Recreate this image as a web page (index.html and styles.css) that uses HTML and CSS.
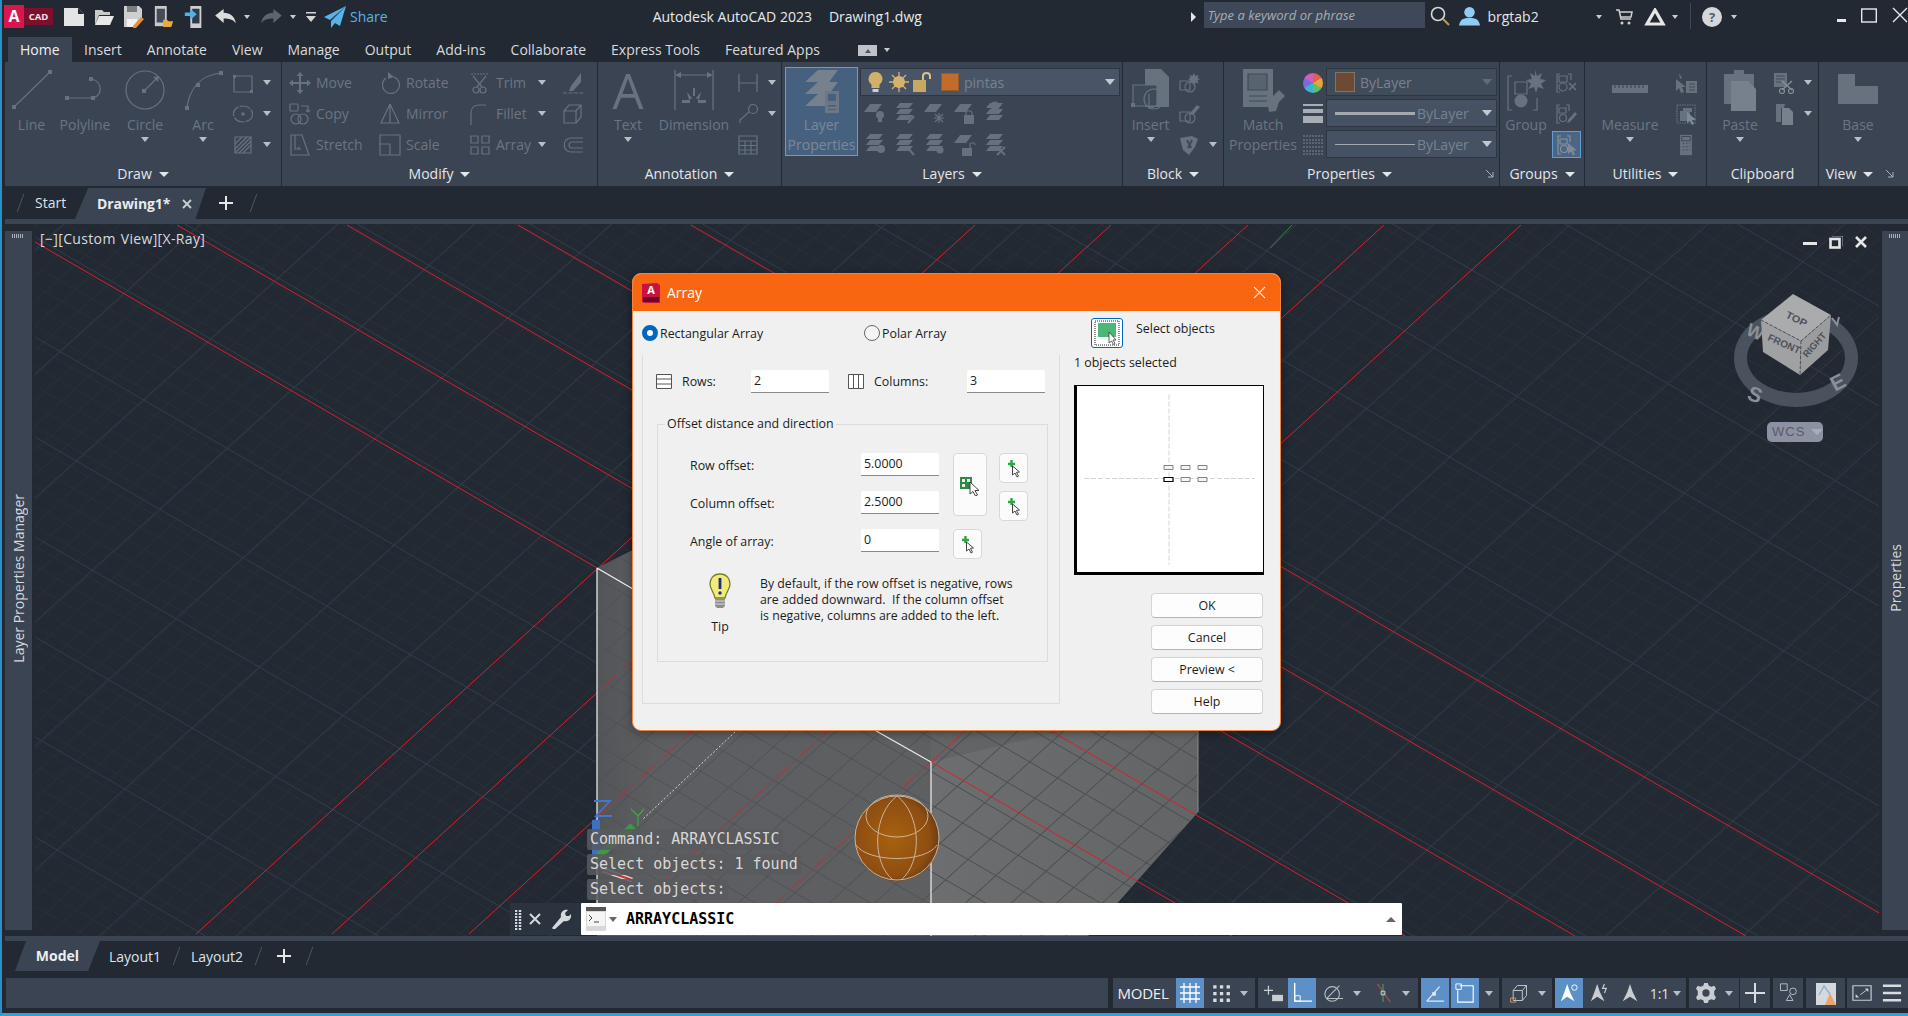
FILE: index.html
```html
<!DOCTYPE html>
<html lang="en">
<head>
<meta charset="utf-8">
<title>Autodesk AutoCAD 2023 Drawing1.dwg</title>
<link rel="stylesheet" href="styles.css">
</head>
<body>
<svg class="defs" width="0" height="0">
  <defs>
    <symbol id="pick" viewBox="0 0 18 20"><path d="M3 6h7M6.500 2v7" stroke="#27a844" stroke-width="2.400" fill="none"/><path d="M7.500 8l0 9 2.500-2 2 4 1.500-.8-2-3.800 3-.4z" fill="#fff" stroke="#333" stroke-width=".9"/></symbol>
    <symbol id="lay" viewBox="0 0 24 24"><path d="M7 3h12l-6 8H1z" fill="#66707e"/></symbol>
    <symbol id="stack" viewBox="0 0 24 24"><path d="M7 2h13l-4 5H3zM7 8h13l-4 5H3zM7 14h13l-4 5H3z" fill="#66707e"/></symbol>
  </defs>
</svg>
<div class="app">

  <header class="titlebar">
    <div class="logo"><span class="logo-a">A</span><span class="logo-cad">CAD</span></div>
    <div class="qat">
      <svg class="qi" viewBox="0 0 20 20"><path d="M0 1h14l6 6v12H0z" fill="#e4e4e4"/><path d="M14 1v6h6z" fill="#222933"/></svg>
      <svg class="qi" viewBox="0 0 20 20"><path d="M1 3h7l2 2h6v3H5L1 18z" fill="#c9c9c9"/><path d="M5 9h15l-4 9H1z" fill="#e8e8e8"/></svg>
      <svg class="qi" viewBox="0 0 20 22"><path d="M0 0h15l3 3v11l-6 7H0z" fill="#cfcfcf"/><path d="M3 0h10v6H3z" fill="#7d7d7d"/><path d="M3 13h10v8H3z" fill="#f3f3f3"/><path d="M9 20l8-9 3 2-8 9-3 .4z" fill="#e88f3c"/></svg>
      <svg class="qi" viewBox="0 0 20 24"><path d="M0 0h13v22H0z" fill="#c9c9c9"/><path d="M2 3h9v15H2z" fill="#444c58"/><path d="M9 15h4l2 1.500h5l-2 6.500H9z" fill="#e8ab3e"/></svg>
      <svg class="qi" viewBox="0 0 20 24"><path d="M6 0h12v24H6z" fill="#d0d0d0"/><path d="M8 3h8v16H8z" fill="#333b47"/><path d="M0 7h6V3l7 6-7 6v-4H0z" fill="#4fb2ec"/></svg>
    </div>
    <div class="undo">
      <svg class="uq" viewBox="0 0 22 16"><path d="M0 7L9 0v4c7 0 12 4 13 11-3-4-7-5-13-5v5z" fill="#dcdcdc"/></svg>
      <i class="car light"></i>
      <svg class="uq mr" viewBox="0 0 22 16"><path d="M22 7L13 0v4C6 4 1 8 0 15c3-4 7-5 13-5v5z" fill="#5c6470"/></svg>
      <i class="car light"></i>
      <svg class="qm" viewBox="0 0 10 10"><path d="M0 0h10v1.500H0zM0 4h10L5 10z" fill="#d5d5d5"/></svg>
      <svg class="share" viewBox="0 0 22 22"><path d="M22 0L0 11l6 3zM22 0L7 15v7l4-5 5 3z" fill="#58b4e8"/></svg>
      <span class="share-t">Share</span>
    </div>
    <div class="apptitle"><span>Autodesk AutoCAD 2023</span><span class="docname">Drawing1.dwg</span></div>
    <i class="tri-r"></i>
    <div class="search">Type a keyword or phrase</div>
    <svg class="mag" viewBox="0 0 20 20"><circle cx="8" cy="8" r="6.500" fill="none" stroke="#d8d8d8" stroke-width="1.600"/><path d="M13 13l6 6" stroke="#c79a4a" stroke-width="2"/></svg>
    <svg class="user" viewBox="0 0 22 20"><circle cx="11" cy="6" r="5.500" fill="#8fcdf5"/><path d="M0 20c1-7 5-8 11-8s10 1 11 8z" fill="#8fcdf5"/></svg>
    <span class="uname">brgtab2</span>
    <i class="car light c-user"></i>
    <svg class="cart" viewBox="0 0 17 16"><path d="M0 1h3l2 9h10M4 3h12l-1 5H5" fill="none" stroke="#cfcfcf" stroke-width="1.500"/><circle cx="6" cy="14" r="1.500" fill="#cfcfcf"/><circle cx="13" cy="14" r="1.500" fill="#cfcfcf"/></svg>
    <svg class="a360" viewBox="0 0 22 18"><path d="M11 2L3 16h16z" fill="none" stroke="#e6e6e6" stroke-width="3.200"/></svg>
    <i class="car light c-a"></i>
    <span class="tsep"></span>
    <span class="help">?</span>
    <i class="car light c-help"></i>
    <div class="winctl">
      <svg class="w-min" viewBox="0 0 15 15"><path d="M0 11h9v3H0z" fill="#e8e8e8"/></svg>
      <svg class="w-max" viewBox="0 0 16 15"><rect x=".7" y="1" width="14.600" height="13" fill="none" stroke="#e8e8e8" stroke-width="1.400"/></svg>
      <svg class="w-x" viewBox="0 0 16 16"><path d="M1 1l14 14M15 1L1 15" stroke="#e8e8e8" stroke-width="1.400"/></svg>
    </div>
  </header>

  <nav class="tabs">
    <span class="tab on">Home</span><span class="tab">Insert</span><span class="tab">Annotate</span><span class="tab">View</span><span class="tab">Manage</span><span class="tab">Output</span><span class="tab">Add-ins</span><span class="tab">Collaborate</span><span class="tab">Express Tools</span><span class="tab">Featured Apps</span>
    <span class="chip"><i class="up"></i></span><i class="car light c-chip"></i>
  </nav>

  <section class="ribbon">
    <div class="panel p-draw">
      <div class="pbody">
        <div class="big w53"><svg class="bi" viewBox="0 0 44 44"><path d="M4 39L40 4" /><path class="f" d="M2 37h4v4H2zM38 2h4v4h-4z"/></svg><span>Line</span></div>
        <div class="big w54"><svg class="bi" viewBox="0 0 44 44"><path d="M4 30h26M28 11c12 2 12 17 2 19"/><path class="f" d="M2 28h4v4H2zM28 28h4v4h-4zM26 9h4v4h-4z"/></svg><span>Polyline</span></div>
        <div class="big w66"><svg class="bi" viewBox="0 0 44 44"><circle cx="22" cy="22" r="19"/><path d="M21 23l13-13"/><path class="f" d="M19 21h4v4h-4z"/><path class="f" d="M36 8l-6 1 5 5z"/></svg><span>Circle</span><i class="car"></i></div>
        <div class="big w50"><svg class="bi" viewBox="0 0 44 44"><path d="M6 39C9 20 20 7 40 5"/><path class="f" d="M4 38h4v4H4zM38 3h4v4h-4zM15 15h4v4h-4z"/></svg><span>Arc</span><i class="car"></i></div>
        <div class="tools pl4">
          <div class="s"><svg class="si" viewBox="0 0 22 22"><path d="M2 4h18v16H2z"/><path class="f" d="M1 3h3v3H1zM18 18h3v3h-3z"/></svg><i class="car g9"></i></div>
          <div class="s"><svg class="si" viewBox="0 0 22 22"><ellipse cx="11" cy="11" rx="9.500" ry="8" stroke-dasharray="11 1.500"/><path class="f" d="M9.500 9.500h3v3h-3z"/></svg><i class="car g9"></i></div>
          <div class="s"><svg class="si" viewBox="0 0 22 22"><path d="M3 3h16v16H3z"/><path d="M3 15L15 3M3 19L19 3M7 19L19 7M11 19l8-8M3 10l7-7"/></svg><i class="car g9"></i></div>
        </div>
      </div>
      <div class="ptitle">Draw<i class="car w"></i></div>
    </div>

    <div class="panel p-mod">
      <div class="pbody modgrid">
        <div class="s t"><svg class="si" viewBox="0 0 22 22"><path class="f" d="M11 0l3.500 4H12v6h6V7.500l4 3.500-4 3.500V12h-6v6h2.500L11 22l-3.500-4H10v-6H4v2.500L0 11l4-3.500V10h6V4H7.500z"/></svg>Move</div>
        <div class="s t"><svg class="si" viewBox="0 0 22 22"><path d="M15 5a8.500 8.500 0 1 1-8 1"/><path class="f" d="M9 0v7l6-2z"/></svg>Rotate</div>
        <div class="s t tc"><svg class="si" viewBox="0 0 22 22"><path d="M2 2h18" stroke-dasharray="2 1"/><path d="M4 4l9 11M17 4L8 15"/><circle cx="7" cy="18" r="3"/><circle cx="14" cy="18" r="3"/></svg>Trim<i class="car g9 end"></i></div>
        <div class="s"><svg class="si" viewBox="0 0 22 22"><path class="f" d="M19 1v9l-8 9H7l2-5z"/><path d="M1 21h20" stroke-dasharray="4 1.500"/></svg></div>
        <div class="s t"><svg class="si" viewBox="0 0 22 22"><rect x="1" y="1" width="8" height="7" rx="1"/><path d="M12 3h7v6M19 9l-2-2M19 9l2-2"/><circle cx="7" cy="16" r="5"/><circle cx="14" cy="16" r="5"/></svg>Copy</div>
        <div class="s t"><svg class="si" viewBox="0 0 22 22"><path d="M11 1L2 20h9zM11 1l9 19h-9z"/></svg>Mirror</div>
        <div class="s t tc"><svg class="si" viewBox="0 0 22 22"><path d="M2 22V10c0-5 3-8 8-8h7"/></svg>Fillet<i class="car g9 end"></i></div>
        <div class="s"><svg class="si" viewBox="0 0 22 22"><path d="M2 8h12v12H2zM2 8l5-6h12v12l-5 6M14 8l5-6"/></svg></div>
        <div class="s t"><svg class="si" viewBox="0 0 22 22"><path d="M2 1h11l7 20H2zM6 1v14h5l-2-2"/></svg>Stretch</div>
        <div class="s t"><svg class="si" viewBox="0 0 22 22"><path d="M1 1h20v20H1zM1 10h10v11"/></svg>Scale</div>
        <div class="s t tc"><svg class="si" viewBox="0 0 22 22"><path d="M2 2h7v7H2zM13 2h7v7h-7zM2 13h7v7H2zM13 13h7v7h-7z"/></svg>Array<i class="car g9 end"></i></div>
        <div class="s"><svg class="si" viewBox="0 0 22 22"><path d="M21 4H9c-9 0-9 14 0 14h12M21 8H10c-4 0-4 6 0 6h11"/></svg></div>
      </div>
      <div class="ptitle">Modify<i class="car w"></i></div>
    </div>

    <div class="panel p-ann">
      <div class="pbody">
        <div class="big w60"><span class="bigA">A</span><span>Text</span><i class="car"></i></div>
        <div class="big w72"><svg class="bi" viewBox="0 0 44 44"><path d="M3 2v40M41 2v40M5 7h34"/><path class="f" d="M3 7l6-3v6zM41 7l-6-3v6zM10 32h8v3h-8zM26 32h8v3h-8zM15 24l5 6 -3 2zM29 24l-5 6 3 2zM21 20h2v8h-2z"/></svg><span>Dimension</span></div>
        <div class="tools pl7">
          <div class="s"><svg class="si" viewBox="0 0 22 22"><path d="M2 2v18M20 2v18M2 11h18"/></svg><i class="car g9"></i></div>
          <div class="s"><svg class="si" viewBox="0 0 22 22"><circle cx="16" cy="6" r="4.500"/><path d="M12 9L3 17v3"/></svg><i class="car g9"></i></div>
          <div class="s"><svg class="si" viewBox="0 0 22 22"><path d="M2 2h18v18H2zM2 7h18M2 11.500h18M2 16h18M8 7v13M14 7v13"/></svg></div>
        </div>
      </div>
      <div class="ptitle">Annotation<i class="car w"></i></div>
    </div>

    <div class="panel p-lay">
      <div class="pbody">
        <div class="lp">
          <svg class="lpi" viewBox="0 0 36 44"><path class="lf" d="M14 1h20l-9 12H1zM14 13h20l-9 12H1zM14 25h20l-9 12H1z"/><path class="lb" d="M21 22h14v22H21z"/><path class="lw" d="M24 25h8v7h-8zM24 36h8v1.500h-8zM24 40h8v1h-8z"/></svg>
          <span>Layer</span><span>Properties</span>
        </div>
        <div class="laycol">
          <div class="combo lc">
            <svg class="ci" viewBox="0 0 14 20"><path d="M7 0a7 7 0 0 1 4 12.700V16H3v-3.300A7 7 0 0 1 7 0z" fill="#d1b06a"/><path d="M4 17h6v3H4z" fill="#cfcfcf"/></svg>
            <svg class="ci ci-b" viewBox="0 0 20 20"><circle cx="10" cy="10" r="6" fill="#d4b46a"/><path d="M10 0v20M0 10h20M3 3l14 14M17 3L3 17" stroke="#d4b46a" stroke-width="1.300"/></svg>
            <svg class="ci ci-c" viewBox="0 0 20 20"><path d="M0 8h13v12H0z" fill="#c9a861"/><path d="M10 8V4c0-4 7-4 7 0v3" fill="none" stroke="#d9c28c" stroke-width="2"/></svg>
            <span class="sw"></span><span class="cname">pintas</span><i class="car big-c"></i>
          </div>
          <div class="lrow">
            <svg class="li" viewBox="0 0 24 24"><use href="#lay"/><circle cx="17" cy="14" r="4" fill="#66707e"/><path d="M15 17h4v4h-4z" fill="#66707e"/></svg>
            <svg class="li" viewBox="0 0 24 24"><use href="#stack"/><path d="M15 22l6-7" stroke="#66707e" stroke-width="2"/></svg>
            <svg class="li" viewBox="0 0 24 24"><use href="#lay"/><path d="M16 12v10M11 17h10M12 13l8 8M20 13l-8 8" stroke="#66707e"/></svg>
            <svg class="li" viewBox="0 0 24 24"><use href="#lay"/><path d="M11 14h10v9H11z" fill="#66707e"/><path d="M13 14v-2c0-3 6-3 6 0v2" fill="none" stroke="#66707e"/></svg>
            <svg class="li" viewBox="0 0 24 24"><use href="#stack"/><circle cx="12" cy="5" r="4.500" fill="#66707e"/></svg>
          </div>
          <div class="lrow">
            <svg class="li" viewBox="0 0 24 24"><use href="#stack"/><circle cx="18" cy="17" r="4" fill="#66707e"/></svg>
            <svg class="li" viewBox="0 0 24 24"><use href="#stack"/><path d="M15 16l6 7" stroke="#66707e" stroke-width="2"/></svg>
            <svg class="li" viewBox="0 0 24 24"><use href="#stack"/><circle cx="17" cy="18" r="3.500" fill="#66707e"/></svg>
            <svg class="li" viewBox="0 0 24 24"><use href="#lay"/><path d="M9 16h10v8H9z" fill="#66707e"/><path d="M17 16v-3c0-3 5-3 5 0" fill="none" stroke="#66707e"/></svg>
            <svg class="li" viewBox="0 0 24 24"><use href="#stack"/><path d="M14 15l8 8M22 15l-8 8" stroke="#66707e" stroke-width="2"/></svg>
          </div>
        </div>
      </div>
      <div class="ptitle">Layers<i class="car w"></i></div>
    </div>

    <div class="panel p-blk">
      <div class="pbody">
        <div class="big w55"><svg class="bi" viewBox="0 0 44 44"><path class="f" d="M16 1h16l8 8v30H16z"/><path d="M4 17h24v21H4z" fill="#3f4a58"/><path d="M20 26v14a13 13 0 1 0 0-26"/><circle cx="25" cy="31" r="10"/><path class="f" d="M2 35h4v4H2z"/></svg><span>Insert</span><i class="car"></i></div>
        <div class="tools">
          <div class="s"><svg class="si" viewBox="0 0 22 22"><path d="M2 9h10v9H2z"/><circle cx="12" cy="15" r="5"/><path class="f" d="M16 1l1.500 3 3-1-1 3 2.500 1-2.500 1.500 1 3-3-1-1.500 3-1.500-3-3 1 1-3-2.500-1.500 2.500-1-1-3 3 1z"/></svg></div>
          <div class="s"><svg class="si" viewBox="0 0 22 22"><path d="M2 9h10v9H2z"/><circle cx="12" cy="15" r="5"/><path class="f" d="M13 9l6-7 3 2-6 7-4 1z"/></svg></div>
          <div class="s"><svg class="si" viewBox="0 0 22 22"><path class="f" d="M2 4l12-2 6 3-3 8-6 8-6-5z"/><path d="M9 6l4 8M14 6l-4 8" stroke="#3f4a58" stroke-width="2"/></svg><i class="car g9"></i></div>
        </div>
      </div>
      <div class="ptitle">Block<i class="car w"></i></div>
    </div>

    <div class="panel p-prop">
      <div class="pbody">
        <div class="big w78 lines2"><svg class="bi" viewBox="0 0 44 44"><path class="f" d="M2 1h30v38H2z"/><path d="M7 6h19v16H7zM8 28h18M8 33h18" stroke="#3f4a58" fill="#59636f"/><path class="f" d="M32 28l6-6 6 6-6 6-3 9-7 1-1-7z"/></svg><span>Match</span><span>Properties</span></div>
        <div class="propicons">
          <div class="wheel"></div>
          <svg class="si" viewBox="0 0 22 22"><path d="M1 1h20v2H1zM1 6h20v4H1zM1 13h20v7H1z" fill="#a8adb5" stroke="none"/></svg>
          <svg class="si" viewBox="0 0 22 22"><path d="M1 2h20M1 6h20M1 9h20M1 13h20M1 17h20M1 20h20" stroke="#7d8591" stroke-dasharray="2 1" stroke-width="1"/></svg>
        </div>
        <div class="propcombos">
          <div class="combo pc"><span class="sw2"></span><span class="cname">ByLayer</span><i class="car big-c dim"></i></div>
          <div class="combo pc ac"><span class="lw1"></span><span class="cname">ByLayer</span><i class="car big-c"></i></div>
          <div class="combo pc ac"><span class="lw2"></span><span class="cname">ByLayer</span><i class="car big-c"></i></div>
        </div>
      </div>
      <div class="ptitle pr24">Properties<i class="car w"></i><svg class="launch" viewBox="0 0 8 8"><path d="M0 0l7 7M7 2v5H2" stroke="#aab0b8" fill="none"/></svg></div>
    </div>

    <div class="panel p-grp">
      <div class="pbody">
        <div class="big w52"><svg class="bi" viewBox="0 0 40 44"><path d="M6 8H2v34h4M27 42h4V30"/><path d="M9 14h12v12H9z"/><circle cx="15" cy="33" r="6.500" class="f"/><path class="f" d="M29 2l2 6 5-3-2 6 6 1-5 4 3 5-6-2-2 6-2-6-6 2 3-5-5-4 6-1-2-6 5 3z"/></svg><span>Group</span></div>
        <div class="tools pl3">
          <div class="s"><svg class="si" viewBox="0 0 22 22"><path d="M5 2H2v18h3M13 2h3v6"/><path d="M4 4h8v6H4z"/><circle cx="8" cy="15" r="4"/><path d="M14 11l7 7M21 11l-7 7" stroke-width="1.600"/></svg></div>
          <div class="s"><svg class="si" viewBox="0 0 22 22"><path d="M5 2H2v18h3M11 2h3v6"/><path d="M4 5h7v5H4z"/><circle cx="8" cy="15" r="3.500"/><path class="f" d="M13 17l7-8 2 2-7 8-3 1z"/></svg></div>
          <div class="s hl"><svg class="si" viewBox="0 0 22 22"><path d="M5 2H2v18h3M11 2h3v6"/><path d="M4 5h7v5H4z"/><circle cx="8" cy="15" r="3.500"/><path d="M12 9v11l3-2.500 2 4 2-1-2-4h4z" fill="#7f8a98" stroke="none"/></svg></div>
        </div>
      </div>
      <div class="ptitle">Groups<i class="car w"></i></div>
    </div>

    <div class="panel p-util">
      <div class="pbody">
        <div class="big w90"><svg class="bi ruler" viewBox="0 0 38 44"><path class="f" d="M1 17h36v8H1z"/><path d="M4 17v3M8 17v3M12 17v3M16 17v3M20 17v3M24 17v3M28 17v3M32 17v3" stroke="#3f4a58"/></svg><span>Measure</span><i class="car"></i></div>
        <div class="tools">
          <div class="s"><svg class="si" viewBox="0 0 22 22"><path class="f" d="M1 7v12l3-3 2 5 3-1-2-5h4zM4 1l3 5-2 1zM11 9h11v12H11z"/><path d="M14 12h6M14 15h6M14 18h6" stroke="#3f4a58"/></svg></div>
          <div class="s"><svg class="si" viewBox="0 0 22 22"><path d="M2 2h18v18H2z" stroke-dasharray="1.500 1"/><path class="f" d="M5 8h10v10H5zM8 5h9v4H8z"/><path d="M12 9v11l3-2 2 4 2-1-2-4h4z" fill="#7f8a98" stroke="none"/></svg></div>
          <div class="s"><svg class="si" viewBox="0 0 22 26"><path class="f" d="M4 1h14v24H4z"/><path d="M6 3h10v5H6zM7 11h2M11 11h2M15 11h1M7 15h2M11 15h2M15 15h1M7 19h2M11 19h2M15 19h1" stroke="#3f4a58"/></svg></div>
        </div>
      </div>
      <div class="ptitle">Utilities<i class="car w"></i></div>
    </div>

    <div class="panel p-clip">
      <div class="pbody">
        <div class="big w66"><svg class="bi" viewBox="0 0 36 44"><path class="f" d="M2 6h10V2h10v4h10v30H2z"/><path d="M9 13h17l8 8v22H9z" class="f2"/></svg><span>Paste</span><i class="car"></i></div>
        <div class="tools">
          <div class="s"><svg class="si" viewBox="0 0 22 22"><path class="f" d="M1 1h13v14H1z"/><path d="M3 4h9M3 7h9M3 10h5" stroke="#3f4a58"/><path d="M9 9l10 9M19 9L9 18" stroke="#858d99" stroke-width="1.500"/><circle cx="9" cy="19" r="2.500" stroke="#858d99"/><circle cx="18" cy="19" r="2.500" stroke="#858d99"/></svg><i class="car g9"></i></div>
          <div class="s"><svg class="si" viewBox="0 0 22 22"><path class="f" d="M3 1h9l-1 4h-3v14H3z"/><path class="f2" d="M9 5h7l4 4v13H9z"/></svg><i class="car g9"></i></div>
        </div>
      </div>
      <div class="ptitle">Clipboard</div>
    </div>

    <div class="panel p-view">
      <div class="pbody">
        <div class="big w78"><svg class="bi" viewBox="0 0 42 44"><path class="f" d="M1 6h17v12h23v18H1z"/></svg><span>Base</span><i class="car"></i></div>
      </div>
      <div class="ptitle pr26">View<i class="car w"></i><svg class="launch l2" viewBox="0 0 8 8"><path d="M0 0l7 7M7 2v5H2" stroke="#aab0b8" fill="none"/></svg></div>
    </div>
  </section>

  <div class="doctabs">
    <i class="slash sl1"></i><span class="dt-start">Start</span>
    <span class="dt-active"><b>Drawing1*</b><svg class="dt-x" viewBox="0 0 10 10"><path d="M1 1l8 8M9 1L1 9" stroke="#c9ced4" stroke-width="1.800"/></svg></span>
    <svg class="plus" viewBox="0 0 16 16"><path d="M8 1v14M1 8h14" stroke="#e4e6e8" stroke-width="2"/></svg>
    <i class="slash sl2"></i>
  </div>
  <div class="band"></div>

  <main class="work">
    <aside class="side left"><i class="grip"></i><span class="vtext">Layer Properties Manager</span></aside>
    <div class="viewport">
      <svg class="canvas" viewBox="35 224 1844 712" preserveAspectRatio="none">
        <defs>
          <pattern id="minor" patternUnits="userSpaceOnUse" width="100" height="100" patternTransform="matrix(.1668 .0968 .1342 -.1222 37 237)">
            <path d="M0 50H100M50 0V100" stroke="#272e39" stroke-width="5" fill="none"/>
          </pattern>
          <pattern id="pgrid" patternUnits="userSpaceOnUse" width="100" height="100" patternTransform="matrix(.278 .161 .2237 -.2037 37 237)">
            <path d="M0 50H100M50 0V100" stroke="#4a4d50" stroke-width="3" fill="none"/>
          </pattern>
          <linearGradient id="pl" x1="0" x2="1" y1="0" y2="0"><stop offset="0" stop-color="#515356"/><stop offset=".1" stop-color="#606264"/><stop offset="1" stop-color="#636566"/></linearGradient>
          <linearGradient id="pr" x1="0" x2="1" y1="0" y2="0"><stop offset="0" stop-color="#6c6e6f"/><stop offset="1" stop-color="#626465"/></linearGradient>
          <radialGradient id="ball" cx=".45" cy=".5" r=".55"><stop offset="0" stop-color="#a8610f"/><stop offset=".8" stop-color="#8e4e12"/><stop offset="1" stop-color="#6d3d14"/></radialGradient>
        </defs>
        <rect x="35" y="224" width="1844" height="712" fill="url(#minor)"/>
        <path class="gridA" d="M35 -763L1879 306M35 -663L1879 406M35 -563L1879 506M35 -463L1879 606M35 -363L1879 706M35 -263L1879 806M35 -163L1879 906M35 -63L1879 1006M35 37L1879 1106M35 137L1879 1206M35 237L1879 1306M35 337L1879 1406M35 437L1879 1506M35 537L1879 1606M35 637L1879 1706M35 737L1879 1806M35 837L1879 1906"/>
        <path class="gridA" d="M35 250L1879 -1419M35 374L1879 -1295M35 498L1879 -1171M35 622L1879 -1047M35 746L1879 -923M35 870L1879 -799M35 994L1879 -675M35 1118L1879 -551M35 1242L1879 -427M35 1366L1879 -303M35 1490L1879 -179M35 1614L1879 -55M35 1738L1879 69M35 1862L1879 193M35 1986L1879 317M35 2110L1879 441M35 2234L1879 565M35 2358L1879 689M35 2482L1879 813M35 2606L1879 937"/>
        <path d="M597 568L931 400L1198 600V812L1088 936H597z" fill="url(#pl)"/>
        <path d="M931 762L1198 700V812L1088 936H931z" fill="url(#pr)"/>
        <path d="M597 568L931 400L1198 600V812L1088 936H597z" fill="url(#pgrid)"/>
        <path d="M35 242L597 568M931 762L1232 936M177 225L1405 936M347 225L1575 936M518 225L1746 936M691 225L1919 936" class="red"/>
        <path d="M975 225L196 934M1111 225L332 934M1248 225L469 934M1384 225L605 934M1521 225L742 934" class="red"/>
        <path d="M597 568L931 400V936H597z" fill="#58595b" opacity=".35"/>
        <path d="M1292 225L1270 248" stroke="#2c8a3c" fill="none"/>
        <path d="M597 568V905M597 568L878 732L931 762V936" class="white"/>
        <path d="M1198 700V812" class="faint"/>
        <path d="M735 732L642 820" class="dots"/>
        <ellipse cx="897" cy="838" rx="42" ry="43" fill="url(#ball)"/>
        <g class="wire">
          <ellipse cx="897" cy="838" rx="42" ry="42"/>
          <ellipse cx="897" cy="816" rx="31" ry="21"/>
          <path d="M856 845c12 18 70 18 81 0M897 796c-24 18-26 66 -4 84M897 796c24 18 26 66 4 84"/>
        </g>
        <path d="M596 820V857" stroke="#3d6fc4" stroke-width="8" fill="none"/>
        <path d="M596 858L633 826" stroke="#3d9a42" stroke-width="7" fill="none"/>
        <path d="M603 870L632 880" stroke="#d9d3d3" stroke-width="5" fill="none"/>
        <path d="M603 870L632 880" stroke="#c03535" stroke-width="2" fill="none"/>
        <path d="M594 801h16L596 816h16" fill="none" stroke="#3f78cc" stroke-width="1.800"/>
        <path d="M631 809l7 7 6-7M638 816v10" fill="none" stroke="#43a34a" stroke-width="1.300"/>
      </svg>
      <div class="vplabel">[&#8722;][Custom View][X-Ray]</div>
      <div class="vpctl">
        <svg class="vc1" viewBox="0 0 14 14"><path d="M0 7h14v3H0z" fill="#e6e6e6"/></svg>
        <svg class="vc2" viewBox="0 0 14 13"><path d="M3 0h11v10" fill="none" stroke="#aab" stroke-width="1"/><rect x="1.500" y="3" width="9" height="8.500" fill="none" stroke="#e6e6e6" stroke-width="2.600"/></svg>
        <svg class="vc3" viewBox="0 0 12 12"><path d="M1 1l10 10M11 1L1 11" stroke="#e6e6e6" stroke-width="2.600"/></svg>
      </div>
      <svg class="cube" viewBox="1725 285 140 130">
        <path fill-rule="evenodd" d="M1734 358a62 49 0 1 0 124 0a62 49 0 1 0-124 0zM1747 358a49 35 0 1 0 98 0a49 35 0 1 0-98 0z" fill="#4a525e"/>
        <text class="cl" transform="translate(1745 334) rotate(25)" font-size="18">W</text>
        <text class="cl" transform="translate(1746 399) rotate(20)" font-size="21">S</text>
        <text class="cl" transform="translate(1835 392) rotate(-28)" font-size="21">E</text>
        <path d="M1832 318l5 7 2-8" stroke="#8b9098" stroke-width="2" fill="none"/>
        <path d="M1793 294L1831 315L1801 341L1761 320z" fill="#a9abad"/>
        <path d="M1761 320L1801 341L1800 375L1763 352z" fill="#9fa1a3"/>
        <path d="M1831 315L1801 341L1800 375L1828 350z" fill="#9a9c9e"/>
        <path d="M1761 320L1801 341L1831 315M1801 341L1800 375" fill="none" stroke="#4d5158" stroke-dasharray="3 2"/>
        <text class="cf" transform="translate(1785 317) rotate(27) scale(1 .9)" font-size="11">TOP</text>
        <text class="cf" transform="translate(1767 340) rotate(24)" font-size="10">FRONT</text>
        <text class="cf" transform="translate(1807 358) rotate(-48)" font-size="9.500">RIGHT</text>
      </svg>
      <div class="wcs">WCS<i class="wcs-c"></i></div>
      <div class="history">
        <span>Command: ARRAYCLASSIC</span>
        <span>Select objects: 1 found</span>
        <span>Select objects:</span>
      </div>
      <div class="cmdline">
        <div class="cmdgrip">
          <svg class="dotsg" viewBox="0 0 7 21"><path d="M0 0h7v21H0z" fill="none"/><path d="M1 1v20M5 1v20" stroke="#d5d8dc" stroke-width="2.500" stroke-dasharray="2 1"/></svg>
          <svg class="cmdx" viewBox="0 0 12 12"><path d="M1 1l10 10M11 1L1 11" stroke="#d5d8dc" stroke-width="2"/></svg>
          <svg class="wrench" viewBox="0 0 20 20"><path d="M1 19l9-11c-1-4 2-8 7-7l-3 3 1 3 3 0 2-2c1 5-3 8-7 7l-10 9z" fill="#d5d8dc"/></svg>
        </div>
        <div class="cmdbox">
          <svg class="cmdico" viewBox="0 0 20 24"><path d="M0 0h20v24H0z" fill="#d8d8d8"/><path d="M1 5h18v14H1z" fill="#f5f5f5"/><path d="M0 0h20v4H0z" fill="#555"/><path d="M3 8l3 3-3 3M8 15h5" stroke="#444" fill="none"/></svg>
          <i class="car cmdcar"></i>
          <span class="cmdtxt">ARRAYCLASSIC</span>
          <i class="up cmdup"></i>
        </div>
      </div>
    </div>
    <aside class="side right"><i class="grip"></i><span class="vtext">Properties</span></aside>
  </main>
  <div class="band"></div>

  <div class="layouttabs">
    <span class="lt-model">Model</span>
    <span class="lt">Layout1</span><i class="slash sl3"></i>
    <span class="lt">Layout2</span><i class="slash sl4"></i>
    <svg class="plus p2" viewBox="0 0 16 16"><path d="M8 1v14M1 8h14" stroke="#e4e6e8" stroke-width="2"/></svg>
    <i class="slash sl5"></i>
  </div>

  <footer class="status">
    <div class="sb-left"></div>
    <div class="sg w142">
      <span class="sc w60 stxt">MODEL</span>
      <span class="sc w28 act ml3"><svg class="st" viewBox="0 0 20 20"><path d="M4 0v20M10 0v20M16 0v20M0 4h20M0 10h20M0 16h20" stroke="#fff" stroke-width="1.300"/></svg></span>
      <span class="sc w50"><svg class="st" viewBox="0 0 18 18"><path d="M2 2h3v3H2zM8 2h3v3H8zM14 2h3v3h-3zM2 8h3v3H2zM8 8h3v3H8zM14 8h3v3h-3zM2 14h3v3H2zM8 14h3v3H8zM14 14h3v3h-3z" fill="#d8dbdf"/></svg><i class="car st-c"></i></span>
    </div>
    <div class="sg w160">
      <span class="sc w30"><svg class="st" viewBox="0 0 22 22"><path d="M6 3v10M1 8h10" stroke="#c9cdd2" stroke-width="1.400"/><path d="M10 13h12v7H10z" fill="#c9cdd2"/></svg></span>
      <span class="sc w28 act"><svg class="st" viewBox="0 0 22 22"><path d="M3 0v20h19" fill="none" stroke="#fff" stroke-width="1.500"/><path d="M3 14h6v6H3z" fill="none" stroke="#fff" stroke-width="1"/></svg></span>
      <span class="sc w52"><svg class="st" viewBox="0 0 22 22"><circle cx="9" cy="12" r="8" fill="none" stroke="#b7bcc2" stroke-width="1.200"/><path d="M3 17L17 3M3 17h18" fill="none" stroke="#b7bcc2" stroke-width="1.200"/></svg><i class="car st-c"></i></span>
      <span class="sc w46"><svg class="st" viewBox="0 0 22 22"><path d="M5 1l14 20" stroke="#b84a4a" stroke-width="1.200"/><path d="M11 1v20" stroke="#4a9a5a" stroke-width="1.200"/><path d="M9 9h4v4H9z" fill="none" stroke="#dde"/></svg><i class="car st-c"></i></span>
    </div>
    <div class="sg w78">
      <span class="sc w28 act"><svg class="st" viewBox="0 0 22 22"><path d="M2 20L16 4M2 20h19" fill="none" stroke="#dfe7f2" stroke-width="1.400"/><path d="M8 10h4v4H8z" fill="#dfe7f2"/></svg></span>
      <span class="sc w28 act ml2"><svg class="st" viewBox="0 0 22 22"><path d="M5 3h15v18H3V8" fill="none" stroke="#fff" stroke-width="1.200"/><path d="M1 1h6v6H1z" fill="none" stroke="#fff"/></svg></span>
      <span class="sc w20"><i class="car"></i></span>
    </div>
    <div class="sg w50">
      <span class="sc w50"><svg class="st" viewBox="0 0 22 24"><path d="M4 9h11v12H4zM4 9l5-6h11v12l-5 6M15 9l5-6" fill="none" stroke="#c9cdd2" stroke-width="1.100"/><path d="M1 18h6v5H1z" fill="none" stroke="#e4a06a"/></svg><i class="car st-c"></i></span>
    </div>
    <div class="sg w131">
      <span class="sc w28 act"><svg class="st" viewBox="0 0 22 22"><path d="M9 1l3 9 5 10-8-5-7 5 4-10z" fill="#fff"/><circle cx="17" cy="5" r="3" fill="none" stroke="#fff"/></svg></span>
      <span class="sc w31"><svg class="st" viewBox="0 0 22 22"><path d="M9 1l3 9 5 10-8-5-7 5 4-10z" fill="#c9cdd2"/><path d="M17 1l-2 5h4l-2 5" fill="none" stroke="#c9cdd2" stroke-width="1.300"/></svg></span>
      <span class="sc w31"><svg class="st" viewBox="0 0 22 22"><path d="M11 1l3 9 5 10-8-5-8 5 5-10z" fill="#c9cdd2"/></svg></span>
      <span class="sc w41 s11">1:1<i class="car ml4"></i></span>
    </div>
    <div class="sg w50">
      <span class="sc w50"><svg class="st gear" viewBox="0 0 22 22"><path d="M9 0h4l1 3 3 1 3-1 2 3-2 3v4l2 3-2 3-3-1-3 1-1 3H9l-1-3-3-1-3 1-2-3 2-3V9L0 6l2-3 3 1 3-1z" fill="#c9cdd2"/><circle cx="11" cy="11" r="4" fill="#3b4453"/></svg><i class="car st-c"></i></span>
    </div>
    <div class="sg w30 gl0"><span class="sc w30"><svg class="st" viewBox="0 0 20 20"><path d="M10 0v20M0 10h20" stroke="#d8dbdf" stroke-width="2"/></svg></span></div>
    <div class="sg w30"><span class="sc w30"><svg class="st" viewBox="0 0 22 24"><path d="M2 1h8v8H2zM9 21l4-7 4 7z" fill="none" stroke="#c9cdd2"/><circle cx="17" cy="10" r="4" fill="none" stroke="#c9cdd2"/></svg></span></div>
    <div class="sg w39"><span class="sc w39"><svg class="stb" viewBox="0 0 24 24"><path d="M2 2h20v22H2z" fill="#d5d8dc"/><path d="M5 14l5-9 6 8" fill="none" stroke="#8ab0d5" stroke-width="1.300"/><path d="M16 12l6 12H11z" fill="#eba46a"/></svg></span></div>
    <div class="sg w61 lastg">
      <span class="sc w30"><svg class="st" viewBox="0 0 22 22"><path d="M1 3h20v16H1z" fill="none" stroke="#c9cdd2" stroke-width="1.300"/><path d="M14 6h4v4zM8 16H4v-4z" fill="#c9cdd2"/><path d="M9 13l8-6" stroke="#c9cdd2"/></svg></span>
      <span class="sc w30"><svg class="st" viewBox="0 0 22 22"><path d="M1 3h20M1 11h20M1 19h20" stroke="#d8dbdf" stroke-width="2.600"/></svg></span>
    </div>
  </footer>

  <div class="dialog">
    <div class="dlg-title">
      <svg class="dlg-ico" viewBox="0 0 18 20"><path d="M0 1l15-1 3 2v18H2l-2-1z" fill="#c8123f"/><path d="M1 14h16v5H1z" fill="#6e0a26"/><text x="9" y="11" class="dlg-a">A</text></svg>
      <span>Array</span>
      <svg class="dlg-x" viewBox="0 0 14 14"><path d="M1 1l12 12M13 1L1 13" stroke="#fff" stroke-width="1.100"/></svg>
    </div>
    <div class="dlg-body">
      <div class="dlg-left">
        <div class="radios">
          <span class="radio sel"></span><span class="rl1">Rectangular Array</span>
          <span class="radio"></span><span>Polar Array</span>
        </div>
        <div class="frame">
          <div class="rc-row">
            <svg class="rcico" viewBox="0 0 16 15"><path d="M.5.500h15v14H.5zM.5 5h15M.5 10h15" fill="#fff" stroke="#555"/></svg>
            <span>Rows:</span>
            <div class="inp">2</div>
            <span></span>
            <svg class="rcico" viewBox="0 0 16 15"><path d="M.5.500h15v14H.5zM5.500.500v14M10.500.500v14" fill="#fff" stroke="#555"/></svg>
            <span>Columns:</span>
            <div class="inp">3</div>
          </div>
          <fieldset class="offset">
            <legend>Offset distance and direction</legend>
            <div class="ofgrid">
              <span class="oflab">Row offset:</span>
              <div class="inp">5.0000</div>
              <button class="pbtn tall"><svg class="pi" viewBox="0 0 22 22"><path d="M1 3h12v12H1z" fill="#2e8b47"/><path d="M3 5h3v3H3zM8 5h3v3H8zM3 10h3v3H3z" fill="#e9f3ea"/><path d="M11 8v12l3-2.500 2.500 4.500 2-1-2.500-4.500h4z" fill="#fff" stroke="#333" stroke-width=".9"/></svg></button>
              <button class="pbtn sm"><svg class="pk"><use href="#pick"/></svg></button>
              <span class="oflab">Column offset:</span>
              <div class="inp">2.5000</div>
              <button class="pbtn sm c3"><svg class="pk"><use href="#pick"/></svg></button>
              <span class="oflab">Angle of array:</span>
              <div class="inp">0</div>
              <button class="pbtn sm"><svg class="pk"><use href="#pick"/></svg></button>
            </div>
            <div class="tiprow">
              <div class="tipcol">
                <svg class="bulb" viewBox="0 0 22 36"><path d="M11 1c7 0 10 5 10 10 0 5-4 8-5 14H6C5 19 1 16 1 11 1 6 4 1 11 1z" fill="#f2ea7c" stroke="#7a7a28" stroke-width="1.300"/><path d="M11 5v11" stroke="#20307a" stroke-width="2.800"/><circle cx="11" cy="20" r="1.700" fill="#20307a"/><path d="M6 26h10v7l-2 2H8l-2-2z" fill="#8f8f8f"/><path d="M6 28h10M6 31h10" stroke="#d8d8d8"/></svg>
                <span>Tip</span>
              </div>
              <p class="tiptext">By default, if the row offset is negative, rows<br>are added downward.&nbsp; If the column offset<br>is negative, columns are added to the left.</p>
            </div>
          </fieldset>
        </div>
      </div>
      <div class="dlg-right">
        <div class="selrow">
          <button class="selbtn"><svg viewBox="0 0 26 26" class="seli"><path d="M1 1h24v24H1z" fill="none" stroke="#222" stroke-dasharray="1 1"/><path d="M4 3h18v14H4z" fill="#4cb878"/><path d="M15 12v11l2.500-2 2 3.500 1.500-1-2-3.500h3z" fill="#fff" stroke="#333" stroke-width=".8"/></svg></button>
          <span>Select objects</span>
        </div>
        <div class="selcount">1 objects selected</div>
        <div class="preview">
          <svg class="pv" viewBox="0 0 186 185">
            <path d="M92 8V178M7 92H178" stroke="#d4d4d4" stroke-dasharray="5 2" fill="none"/>
            <path d="M87 79h9v4h-9zM104 79h9v4h-9zM121 79h9v4h-9zM104 91h9v4h-9zM121 91h9v4h-9z" fill="#f4f4f4" stroke="#666" stroke-width=".8"/>
            <path d="M87 91h9v4h-9z" fill="#fff" stroke="#000" stroke-width="1.200"/>
          </svg>
        </div>
        <div class="btns">
          <button class="dbtn">OK</button>
          <button class="dbtn">Cancel</button>
          <button class="dbtn">Preview &lt;</button>
          <button class="dbtn">Help</button>
        </div>
      </div>
    </div>
  </div>
</div>
</body>
</html>
```
FILE: styles.css
```css
*{box-sizing:border-box}
html,body{margin:0;padding:0;height:100%;overflow:hidden}
body{background:#222933;font-family:"Open Sans","Noto Sans",sans-serif;color:#e3e6ea;font-size:14px}
.defs{position:absolute}
.app{position:relative;width:1908px;height:1016px;background:#222933;border-left:2px solid #2a8fc9;border-bottom:3px solid #2aa3dc;overflow:hidden}
i{display:block;font-style:normal}
svg{display:block;flex:none}

/* carets */
.car{width:0;height:0;flex:none;border-style:solid;border-color:#b9bec5 transparent transparent;border-width:5px 4px 0}
.car.light{border-top-color:#c8ccd1;border-width:4px 3.500px 0}
.car.w{border-top-color:#e3e6ea;border-width:5px 5px 0;margin-left:7px}
.up{width:0;height:0;border-style:solid;border-color:transparent transparent #3b4453;border-width:0 5px 5px}

/* title bar */
.titlebar{height:37px;display:flex;align-items:center;padding-left:2px}
.logo{display:flex;width:49px;height:22px;align-items:center;margin-top:-5px}
.logo-a{width:20px;height:23px;background:#d8174f;color:#fff;font:700 16px/23px "Open Sans",sans-serif;text-align:center}
.logo-cad{width:29px;height:17px;background:#7d0f2d;color:#f1e3e6;font:700 9.500px/17px "Open Sans",sans-serif;text-align:center}
.qat{display:flex;margin-left:11px;gap:10px;align-items:center;margin-top:-4px}
.qi{width:20px;height:22px}
.undo{display:flex;align-items:center;margin-left:11px;margin-top:-4px}
.uq{width:21px;height:15px}
.undo .car{margin-left:8px}
.uq.mr{margin-left:11px}
.qm{width:10px;height:10px;margin-left:10px}
.share{width:22px;height:22px;margin-left:8px}
.share-t{color:#59b5e6;margin-left:4px;font-size:14px}
.apptitle{margin-left:265px;display:flex;gap:17px;color:#e8e9eb;margin-top:-4px;font-size:14px;width:538px;flex:none}
.tri-r{width:0;height:0;border-style:solid;border-color:transparent transparent transparent #e3e6ea;border-width:5px 0 5px 5px;margin-top:-4px}
.search{width:223px;height:26px;margin:-7px 0 0 8px;background:#3e4858;color:#a7adb6;font-style:italic;font-size:13px;line-height:26px;padding-left:4px}
.mag{width:20px;height:20px;margin:-5px 0 0 5px}
.user{width:21px;height:20px;margin:-5px 0 0 9px}
.uname{margin:-4px 0 0 7px;width:54px;color:#e3e6ea}
.c-user{margin:-4px 0 0 55px}
.cart{width:17px;height:16px;margin:-4px 0 0 14px}
.a360{width:22px;height:18px;margin:-4px 0 0 11px}
.c-a{margin:-4px 0 0 6px}
.tsep{width:1px;height:26px;background:#3e4858;margin:-5px 0 0 12px}
.help{width:20px;height:20px;border-radius:50%;background:#d5d7da;color:#555c66;font:700 13px/20px "Open Sans",sans-serif;text-align:center;margin:-4px 0 0 11px}
.c-help{margin:-4px 0 0 9px}
.winctl{display:flex;margin:-7px 0 0 100px;align-items:center}
.w-min{width:15px;height:15px}
.w-max{width:16px;height:15px;margin-left:9px}
.w-x{width:16px;height:16px;margin-left:15px}

/* ribbon tabs */
.tabs{height:25px;display:flex;align-items:stretch;padding-left:6px}
.tab{padding:0 12.500px;line-height:26px;color:#d7dade;font-size:14px}
.tab.on{background:#3b4453;color:#eef0f2;padding:0 12px}
.chip{width:19px;height:11px;background:#bfc3c9;margin:8px 0 0 26px;display:flex;align-items:center;justify-content:center}
.chip .up{border-width:0 3px 4px;border-bottom-color:#555}
.c-chip{margin:11px 0 0 7px}

/* ribbon */
.ribbon{height:124px;display:flex;margin-left:3px;background:#3b4453}
.panel{flex:none;display:flex;flex-direction:column;border-right:1px solid #222933}
.p-draw{width:277px}.p-mod{width:316px}.p-ann{width:184px}.p-lay{width:341px}.p-blk{width:101px}
.p-prop{width:276px}.p-grp{width:85px}.p-util{width:122px}.p-clip{width:112px}.p-view{width:87px;border-right:0}
.pbody{height:100px;display:flex;color:#6b7583;font-size:14px}
.ptitle{height:24px;display:flex;align-items:center;justify-content:center;color:#e3e6ea;font-size:14px;line-height:24px;position:relative}
.pr24{padding-right:24px}.pr26{padding-right:26px}
.launch{position:absolute;right:5px;top:8px;width:8px;height:8px}
.launch.l2{right:12px}
.pbody svg{fill:none;stroke:#68727f;stroke-width:1.200}
.pbody .f{fill:#68727f;stroke:none}
.pbody .f2{fill:#77818e;stroke:none}
.big{flex:none;display:flex;flex-direction:column;align-items:center;padding-top:6px;line-height:20px}
.big span{display:block}
.big .bi+span{margin-top:3px}
.big .car{margin-top:2px}
.bi{width:44px;height:44px}
.ruler{width:38px}
.w50{width:50px}.w52{width:52px}.w53{width:53px}.w54{width:54px}.w55{width:55px}.w60{width:60px}.w66{width:66px}.w72{width:72px}.w78{width:78px}.w90{width:90px}
.bigA{font-size:49px;line-height:44px;height:44px;color:#68727f;margin-bottom:3px}
.tools{display:grid;grid-auto-rows:31px;padding-top:5px}
.pl3{padding-left:3px}.pl4{padding-left:4px}.pl7{padding-left:7px}
.s{display:flex;align-items:center;gap:5px}
.si{width:22px;height:22px}
.g9{margin-left:4px}
.modgrid{display:grid;grid-template-columns:90px 90px 93px 22px;grid-auto-rows:31px;padding:5px 0 0 7px}
.tc{position:relative}
.end{margin-left:auto;margin-right:16px}
.lp{width:73px;height:89px;margin:5px 0 0 3px;background:#46617f;border:1px solid #5f9fd2;display:flex;flex-direction:column;align-items:center;line-height:20px;color:#7d8895;flex:none}
.lpi{width:36px;height:44px;margin:1px 0 2px}
.pbody .lf{fill:#77818e;stroke:none}
.pbody .lb{fill:#6d7784;stroke:none}
.pbody .lw{fill:#46617f;stroke:none}
.laycol{margin:6px 0 0 2px;width:260px}
.combo{height:28px;background:#495566;border:1px solid #2e3643;display:flex;align-items:center;color:#78828f}
.lc{padding-left:5px}
.ci{width:15px;height:20px;margin-left:2px}
.pbody .ci{stroke:none}
.ci-b{width:20px;margin-left:6px}
.ci-c{width:20px;margin-left:4px}
.sw{width:18px;height:18px;background:#c06c2a;border:1px solid #9a5a28;margin-left:8px}
.cname{margin-left:5px}
.big-c{margin-left:auto;margin-right:4px;border-width:6px 5px 0;border-top-color:#c3c8ce}
.big-c.dim{border-top-color:#626c79}
.lrow{display:flex;height:31px;align-items:center;margin:1px 0 -1px}
.lrow .li{width:24px;height:24px;margin:0 3px}
.pbody .li{stroke:none}
.propicons{width:22px;display:grid;grid-auto-rows:31px;padding-top:5px;align-items:center}
.wheel{width:20px;height:20px;margin:auto;border-radius:50%;background:conic-gradient(#e2604c 0 60deg,#e6a53a 60deg 120deg,#5fbe66 120deg 180deg,#36b5cf 180deg 240deg,#7a6ae0 240deg 300deg,#d05fb8 300deg)}
.propcombos{margin:6px 0 0 2px;width:171px;display:grid;grid-auto-rows:28px;row-gap:3px}
.pc{background:#414c5b;padding-left:8px;height:28px}
.pc.ac{background:#465264}
.pc .cname{margin-left:5px}
.sw2{width:20px;height:20px;background:#6d4a33;border:1px solid #7f7467}
.lw1{width:80px;height:3px;background:#a3a8af}
.lw2{width:80px;height:1px;background:#a3a8af}
.ac .cname{margin-left:2px}
.hl{width:29px;height:27px;background:#4a6682;border:1px solid #609dd0;margin:2px 0 0 -3px;justify-content:center}
.hl svg{stroke:#8792a0}

/* doc tabs */
.doctabs{height:33px;display:flex;align-items:center;margin-left:3px;position:relative}
.slash{width:1px;height:18px;background:#4b5564;transform:skewX(-20deg);flex:none}
.sl1{margin-left:15px}
.dt-start{margin-left:14px;color:#dfe2e6;font-size:14px;width:40px}
.dt-active{width:131px;height:31px;align-self:flex-end;display:flex;align-items:center;padding-left:22px;background:#3b4453;clip-path:polygon(10% 0,100% 0,92% 100%,0 100%);color:#e8eaed}
.dt-active b{font-weight:700;font-size:14px;letter-spacing:-.1px}
.dt-x{width:10px;height:10px;margin-left:12px}
.plus{width:16px;height:16px;margin-left:12px}
.sl2{margin-left:19px}
.band{height:5px;background:#3b4453;margin-left:3px}

/* work area */
.work{height:712px;display:flex;position:relative}
.side{width:27px;margin:7px 0 6px 3px;background:#3b4453;flex:none;position:relative;display:flex;align-items:center;justify-content:center}
.side.right{margin:7px 0 6px 3px;width:26px}
.grip{position:absolute;top:3px;left:7px;width:12px;height:4px;background:repeating-linear-gradient(90deg,#aab0b8 0 1px,transparent 1px 2px)}
.vtext{writing-mode:vertical-rl;transform:rotate(180deg);font-size:14px;color:#d5d8dc;white-space:nowrap;margin-top:-5px}
.viewport{width:1844px;margin-left:3px;position:relative;background:#222933;overflow:hidden;flex:none}
.canvas{position:absolute;left:0;top:0;width:1844px;height:712px}
.gridA{stroke:#343d4a;stroke-width:1;fill:none}
.red{stroke:#d9202c;stroke-width:1;fill:none}
.white{stroke:#f0f0f0;stroke-width:1.200;fill:none}
.faint{stroke:#8a8c8e;fill:none}
.dots{stroke:#d8d8d8;stroke-dasharray:2 2;fill:none}
.wire{fill:none;stroke:#d9cdbb;stroke-width:1;opacity:.8}
.vplabel{position:absolute;left:5px;top:5px;color:#d8dbdf;font-size:14px;line-height:20px;word-spacing:1px;letter-spacing:.35px}
.vpctl{position:absolute;left:1768px;top:11px;display:flex;align-items:center}
.vc1{width:14px;height:14px}
.vc2{width:14px;height:13px;margin-left:12px}
.vc3{width:12px;height:12px;margin-left:12px}
.cube{position:absolute;left:1690px;top:61px;width:140px;height:130px}
.cf{font-family:"Liberation Sans",sans-serif;font-weight:700;fill:#4d5158}
.cl{font-family:"Liberation Sans",sans-serif;font-weight:700;fill:#8b9098}
.wcs{position:absolute;left:1732px;top:198px;width:56px;height:20px;border-radius:5px;background:#8d92a3;color:#565c6e;font:13px/20px "Liberation Sans",sans-serif;letter-spacing:1px;padding-left:5px;display:flex;align-items:center;gap:6px}
.wcs-c{width:0;height:0;border-style:solid;border-color:#a9adbb transparent transparent;border-width:6px 6px 0}
.history{position:absolute;left:552px;top:605px;display:flex;flex-direction:column;align-items:flex-start;gap:4px;font:15px/21px "DejaVu Sans Mono",monospace;color:#d8d8d8}
.history span{background:rgba(88,90,94,.85);padding:0 3px;border-radius:2px}
.cmdline{position:absolute;left:475px;top:679px;display:flex;height:32px}
.cmdgrip{width:71px;background:#2b333f;display:flex;align-items:center;padding-left:5px}
.dotsg{width:7px;height:21px}
.cmdx{width:12px;height:12px;margin-left:7px}
.wrench{width:20px;height:20px;margin-left:10px}
.cmdbox{width:821px;background:#fff;display:flex;align-items:center;padding-left:5px;border-radius:1px}
.cmdico{width:20px;height:24px}
.cmdcar{border-top-color:#666;margin-left:3px}
.cmdtxt{font:700 15px "DejaVu Sans Mono",monospace;color:#000;margin-left:9px}
.cmdup{margin-left:auto;margin-right:6px;border-bottom-color:#666}

/* layout tabs */
.layouttabs{height:30px;display:flex;align-items:center;margin-left:3px}
.lt-model{width:85px;height:30px;margin-left:10px;background:#3b4453;clip-path:polygon(13% 0,100% 0,86% 100%,0 100%);font-weight:700;color:#eceef0;line-height:30px;text-align:center;font-size:14px}
.lt{margin-left:9px;color:#dfe2e6;font-size:14px;width:60px}
.sl3,.sl4{margin-left:7px}
.sl3+.lt{margin-left:14px}
.p2{margin-left:17px}
.sl5{margin-left:17px}

/* status bar */
.status{height:30px;margin-top:7px;display:flex;padding-left:4px;gap:3px}
.sb-left{width:1102px;background:#3b4453;margin-right:2px}
.sg{background:#3b4453;display:flex;flex:none}
.gl0{margin-left:-2px}
.w142{width:142px}.w160{width:160px}.w131{width:131px}.w61{width:61px}
.sg.w78{width:78px}.sg.w50{width:50px}
.sc{display:flex;align-items:center;justify-content:center;flex:none;height:30px;gap:9px}
.sc.w60{width:60px}.sc.w50{width:50px}.sc.w52{width:52px}
.w20{width:20px}.w28{width:28px}.w30{width:30px}.w31{width:31px}.w39{width:39px}.w41{width:41px}.w46{width:46px}
.act{background:#5e90c8}
.stxt{font-size:15px;color:#eef0f2;letter-spacing:-.2px}
.ml2{margin-left:2px}.ml3{margin-left:3px}.ml4{margin-left:4px}
.st{width:20px;height:20px}
.stb{width:24px;height:24px}
.st-c{margin-left:0}
.s11{color:#dfe2e6;font-size:14px;gap:0}
.lastg{margin-left:-1px}

/* dialog */
.dialog{position:absolute;left:630px;top:273px;width:649px;height:458px;background:#f0f0f0;border-radius:9px;border:1px solid #f0843c;color:#1c1c1c;font-size:12.400px;overflow:hidden;box-shadow:0 2px 10px rgba(0,0,0,.35)}
.dlg-title{height:37px;background:#f96611;display:flex;align-items:center;color:#fff;font-size:14px;padding-left:9px}
.dlg-ico{width:18px;height:20px;margin-right:7px}
.dlg-a{font:700 11px "Open Sans",sans-serif;fill:#fff;text-anchor:middle}
.dlg-x{width:13px;height:13px;margin-left:auto;margin-right:14px}
.dlg-body{display:flex;padding-left:9px}
.dlg-left{width:418px}
.radios{display:flex;align-items:center;height:22px;margin-top:11px}
.radio{width:16px;height:16px;border-radius:50%;border:1px solid #666;background:#f5f5f5;margin-right:2px;flex:none}
.radio.sel{border:5px solid #0067c0;background:#fff}
.rl1{width:204px}
.frame{margin-top:11px;height:349px;padding-top:15px;border:1px solid #dcdcdc;border-top:0}
.rc-row{display:grid;grid-template-columns:26px 69px 78px 19px 26px 93px 78px;align-items:center;margin:0 0 0 13px;height:22px}
.rcico{width:16px;height:15px}
.inp{height:23px;background:#fff;border-bottom:1px solid #8a8a8a;border-radius:2px 2px 0 0;line-height:21px;padding-left:3px;font-size:12.400px}
.offset{margin:24px 0 0 14px;padding:0;width:391px;height:246px;border:1px solid #dcdcdc;min-width:0}
.offset legend{margin-left:7px;padding:0 2px;line-height:16px;font-size:12.400px}
.ofgrid{display:grid;grid-template-columns:171px 78px 48px 41px;grid-template-rows:30px 30px 30px;row-gap:8px;padding:21px 0 0 32px}
.oflab{line-height:26px}
.pbtn{background:#fbfbfb;border:1px solid #d8d8d8;border-radius:4px;padding:0;display:flex;align-items:center;justify-content:center;margin:0}
.tall{grid-column:3;grid-row:1/3;margin-left:14px;width:34px;height:63px}
.sm{width:29px;height:30px}
.ofgrid>.sm:nth-child(4){grid-column:4;grid-row:1;margin-left:12px}
.ofgrid>.c3{grid-column:4;grid-row:2;margin-left:12px}
.ofgrid>.sm:last-child{grid-column:3;grid-row:3;margin-left:14px}
.pi{width:22px;height:22px}
.pk{width:18px;height:20px}
.tiprow{display:flex;margin-top:14px}
.tipcol{margin-left:42px;width:40px;display:flex;flex-direction:column;align-items:center}
.bulb{width:22px;height:36px;margin-bottom:9px}
.tiptext{margin:3px 0 0 20px;line-height:16px;font-size:12.300px;white-space:nowrap}
.dlg-right{margin-left:14px;width:190px}
.selrow{display:flex;margin:7px 0 0 17px;gap:13px;line-height:22px}
.selbtn{width:32px;height:30px;border:1px solid #0067c0;border-radius:3px;background:#fff;padding:2px;display:flex;align-items:center;justify-content:center}
.seli{width:26px;height:26px}
.selcount{margin-top:7px;line-height:16px}
.preview{margin-top:14px;width:190px;height:190px;background:#fff;border:1px solid #000;border-width:1px 1px 3px 3px}
.pv{width:186px;height:186px}
.btns{margin:18px 0 0 77px;display:grid;grid-auto-rows:25px;row-gap:7px;width:112px}
.dbtn{background:#fdfdfd;border:1px solid #d4d4d4;border-bottom-color:#b5b5b5;border-radius:4px;padding:0;font:12.400px "Open Sans",sans-serif;color:#1c1c1c}
```
